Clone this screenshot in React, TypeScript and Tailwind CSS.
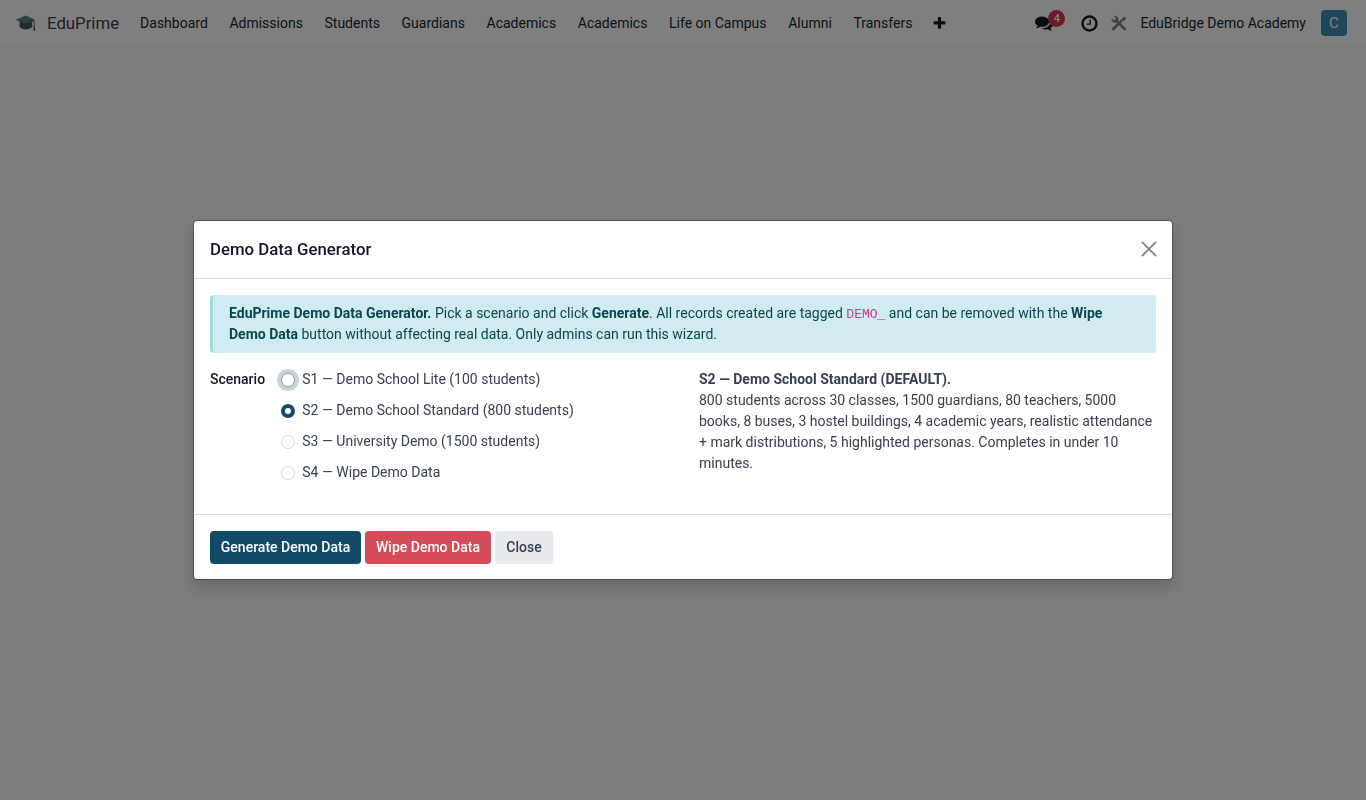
import { useState } from 'react';

const FONT = "font-[Roboto,'Liberation_Sans',sans-serif]";

const menuItems = [
  'Dashboard',
  'Admissions',
  'Students',
  'Guardians',
  'Academics',
  'Academics',
  'Life on Campus',
  'Alumni',
  'Transfers',
];

const scenarios = [
  'S1 — Demo School Lite (100 students)',
  'S2 — Demo School Standard (800 students)',
  'S3 — University Demo (1500 students)',
  'S4 — Wipe Demo Data',
];

function Glyph({ d, className }: { d: string; className?: string }) {
  return (
    <svg viewBox="0 0 1792 1792" fill="currentColor" className={className}>
      <path d={d} />
    </svg>
  );
}

const PLUS =
  'M1600 736v192q0 40-28 68t-68 28h-416v416q0 40-28 68t-68 28h-192q-40 0-68-28t-28-68v-416h-416q-40 0-68-28t-28-68v-192q0-40 28-68t68-28h416v-416q0-40 28-68t68-28h192q40 0 68 28t28 68v416h416q40 0 68 28t28 68z';
const COMMENTS =
  'M1408 768q0 139-94 257t-256.5 186.5-353.5 68.5q-86 0-176-16-124 88-278 128-36 9-86 16h-3q-11 0-20.5-8t-11.5-21q-1-3-1-6.5t.5-6.5 2-6l2.5-5 3.5-5.5 4-5 4.5-5 4-4.5q5-6 23-25t26-29.5 22.5-29 25-38.5 20.5-44q-124-72-195-177t-71-224q0-139 94-257t256.5-186.5 353.5-68.5 353.5 68.5 256.5 186.5 94 257zm384 256q0 120-71 224.5t-195 176.5q10 24 20.5 44t25 38.5 22.5 29 26 29.5 23 25q1 1 4 4.5t4.5 5 4 5 3.5 5.5l2.5 5 2 6 .5 6.5-1 6.5q-3 14-13 22t-22 7q-50-7-86-16-154-40-278-128-90 16-176 16-271 0-472-132 58 4 88 4 161 0 309-45t264-129q125-92 192-212t67-254q0-77-23-152 129 71 204 178t75 230z';
const CLOCK =
  'M1024 544v448q0 14-9 23t-23 9h-320q-14 0-23-9t-9-23v-64q0-14 9-23t23-9h224v-352q0-14 9-23t23-9h64q14 0 23 9t9 23zm416 352q0-148-73-273t-198-198-273-73-273 73-198 198-73 273 73 273 198 198 273 73 273-73 198-198 73-273zm224 0q0 209-103 385.5t-279.5 279.5-385.5 103-385.5-103-279.5-279.5-103-385.5 103-385.5 279.5-279.5 385.5-103 385.5 103 279.5 279.5 103 385.5z';

function CapLogo() {
  return (
    <svg viewBox="0 0 20 16" className="h-4 w-5 shrink-0">
      <path d="M3.6 6.5 9.8 9.6l6.4-3.1v5.4c-2.9 3.3-9.6 3.3-12.6 0z" fill="#43595f" />
      <path d="M0 4.7 9.6.5l9.7 4.2-9.5 4.9z" fill="#617d83" />
      <path d="M0 4.7 9.8 8.8l9.5-4.1-9.5 5.2z" fill="#33474d" />
      <path d="M14 5.4 18.3 6.4v4.8" fill="none" stroke="#43595f" strokeWidth="0.8" />
      <path d="m17.5 11 1.1-.2.9 4.6h-2.1z" fill="#43595f" />
    </svg>
  );
}

function ToolsIcon() {
  return (
    <svg viewBox="0 0 16 16" fill="currentColor" className="h-4 w-4">
      <path d="M1.2 12.9 10 4.6l1.7 1.7-8.4 8.6a1.4 1.4 0 0 1-2.1-2z" />
      <path d="M12.4 6.4 14.9 4a.9.9 0 0 0 0-1.2L14 1.9a.9.9 0 0 0-1.2 0L10.2 4.4z" />
      <path d="M.6 3.2 2.7 5.1l1.7-.4.4-1.7L2.9.9a3.6 3.6 0 0 1 4.2 4.8l7.6 7.5a1.3 1.3 0 0 1-1.9 1.9L5.3 7.4A3.6 3.6 0 0 1 .6 3.2z" />
    </svg>
  );
}

function Navbar() {
  return (
    <header className="flex h-[46px] items-center bg-white pl-4 pr-[19px] text-sm text-[#374151]">
      <CapLogo />
      <span className="ml-[11px] mr-[21px] pt-px text-[16.8px]">EduPrime</span>
      <nav className="flex items-center gap-[21.6px] whitespace-nowrap text-[#20242b]">
        {menuItems.map((item, i) => (
          <span key={i}>{item}</span>
        ))}
        <Glyph d={PLUS} className="-ml-0.5 h-[15px] w-[15px] text-[#111827]" />
      </nav>
      <div className="ml-auto flex items-center text-[#20242b]">
        <span className="relative mr-[27px]">
          <Glyph d={COMMENTS} className="h-[18px] w-[18px] text-[#111827]" />
          <span className="absolute -top-1 left-[13px] flex h-[17px] w-[17px] items-center justify-center rounded-full bg-[#dc3545] text-[11px] font-medium text-white">
            4
          </span>
        </span>
        <Glyph d={CLOCK} className="mr-[12px] h-[19px] w-[19px] text-[#111827]" />
        <span className="mr-[13px] text-[#808080]">
          <ToolsIcon />
        </span>
        <span className="mr-[15px]">EduBridge Demo Academy</span>
        <span className="flex h-[26px] w-[26px] items-center justify-center rounded bg-[#3c8fb3] pt-px text-[15px] text-white">
          C
        </span>
      </div>
    </header>
  );
}

function ScenarioRadio({
  label,
  checked,
  focused,
  onSelect,
}: {
  label: string;
  checked: boolean;
  focused: boolean;
  onSelect: () => void;
}) {
  let ring = 'border border-[#d8dadd]';
  if (checked) ring = 'border-4 border-[#114b68]';
  else if (focused) ring = 'border border-[#88a5b3] ring-4 ring-[#c7d4dc]';

  return (
    <label className="flex h-[21px] items-center text-[#374151]">
      <input type="radio" name="scenario" className="sr-only" checked={checked} onChange={onSelect} />
      <span className={`mr-[7.3px] mt-px h-[14px] w-[14px] shrink-0 rounded-full bg-white ${ring}`} />
      {label}
    </label>
  );
}

function DemoDataDialog() {
  const [selected, setSelected] = useState(1);

  return (
    <div
      role="dialog"
      className="w-[980px] rounded border border-black/30 bg-white bg-clip-padding text-sm leading-[21px] text-[#374151] shadow-[0_8px_16px_rgba(0,0,0,0.15)]"
    >
      <header className="flex h-[58px] items-center justify-between border-b border-[#d8dadd] px-4">
        <h4 className="text-[16.8px] font-medium text-[#111827]">Demo Data Generator</h4>
        <button type="button" aria-label="Close" className="pb-0.5 text-[#7f7f7f]">
          <svg viewBox="0 0 14 14" className="h-[14px] w-[14px] overflow-visible" fill="none" stroke="currentColor" strokeWidth="1.7" strokeLinecap="round">
            <path d="M.4.4l13.2 13.2M13.6.4.4 13.6" />
          </svg>
        </button>
      </header>

      <main className="h-[235px] px-4 pt-4">
        <div className="h-[58px] rounded border-l-[3px] border-[#a2dae3] bg-[#d1ecf1] py-2 pl-4 pr-4 text-[#094750]">
          <b>EduPrime Demo Data Generator.</b> Pick a scenario and click <b>Generate</b>. All records created are tagged{' '}
          <code className="font-['Liberation_Mono',monospace] text-[13px] leading-none text-[#d63384]">DEMO_</code> and
          can be removed with the <b>Wipe Demo Data</b> button without affecting real data. Only admins can run this
          wizard.
        </div>

        <div className="mt-4 grid grid-cols-2 gap-x-8">
          <div className="flex">
            <span className="w-[71px] font-medium text-[#111827]">Scenario</span>
            <div className="flex flex-col gap-[10px]">
              {scenarios.map((label, i) => (
                <ScenarioRadio
                  key={label}
                  label={label}
                  checked={selected === i}
                  focused={i === 0}
                  onSelect={() => setSelected(i)}
                />
              ))}
            </div>
          </div>
          <div>
            <b>S2 — Demo School Standard (DEFAULT).</b>
            <p>
              800 students across 30 classes, 1500 guardians, 80 teachers, 5000 books, 8 buses, 3 hostel buildings, 4
              academic years, realistic attendance + mark distributions, 5 highlighted personas. Completes in under 10
              minutes.
            </p>
          </div>
        </div>
      </main>

      <footer className="flex h-[65px] items-center gap-1 border-t border-[#d8dadd] px-4 font-medium">
        <button type="button" className="h-[33px] w-[151px] rounded bg-[#114b68] text-white">
          Generate Demo Data
        </button>
        <button type="button" className="h-[33px] w-[126px] rounded bg-[#d44c59] text-white">
          Wipe Demo Data
        </button>
        <button type="button" className="h-[33px] w-[58px] rounded bg-[#e7e9ed] text-[#374151]">
          Close
        </button>
      </footer>
    </div>
  );
}

export default function App() {
  return (
    <div className={`h-screen overflow-hidden bg-[#f9f9f9] ${FONT}`}>
      <Navbar />
      <div className="fixed inset-0 flex items-center justify-center bg-black/50">
        <DemoDataDialog />
      </div>
    </div>
  );
}
